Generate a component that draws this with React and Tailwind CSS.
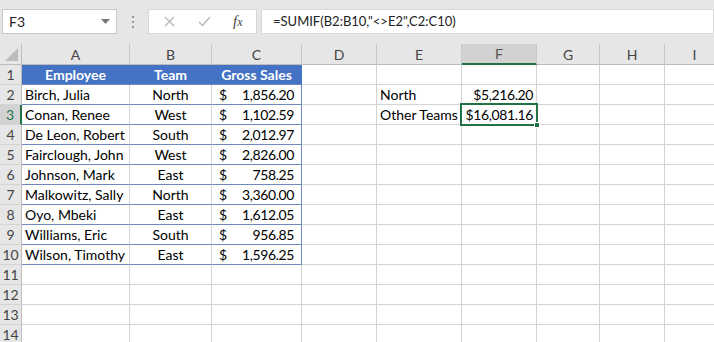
import React from "react";

const cols = ["A", "B", "C", "D", "E", "F", "G", "H", "I"];
const data = [
  ["Birch, Julia", "North", "1,856.20"],
  ["Conan, Renee", "West", "1,102.59"],
  ["De Leon, Robert", "South", "2,012.97"],
  ["Fairclough, John", "West", "2,826.00"],
  ["Johnson, Mark", "East", "758.25"],
  ["Malkowitz, Sally", "North", "3,360.00"],
  ["Oyo, Mbeki", "East", "1,612.05"],
  ["Williams, Eric", "South", "956.85"],
  ["Wilson, Timothy", "East", "1,596.25"],
];

const font = { fontFamily: "Lato, 'Liberation Sans', sans-serif" };

function RowHeader({ n }) {
  const sel = n === 3;
  return (
    <div
      className={
        "h-[20px] flex items-center justify-center border-b border-[#d4d4d4] text-[14px] " +
        (sel
          ? "bg-[#d2d2d2] text-[#217346] border-r-2 border-r-[#217346]"
          : "bg-[#e6e6e6] text-[#444] border-r border-r-[#bdbdbd]")
      }
    >
      {n}
    </div>
  );
}

function Cell({ className = "", children }) {
  return (
    <div className={"h-[20px] border-r border-b border-[#d4d4d4] flex items-center overflow-visible whitespace-nowrap text-[14px] text-black " + className}>
      {children}
    </div>
  );
}

export default function App() {
  const rows = [];
  for (let r = 1; r <= 14; r++) {
    const cells = [];
    cells.push(<RowHeader key="h" n={r} />);
    if (r === 1) {
      cells.push(<Cell key="a" className="bg-[#4472c4] text-white font-bold justify-center border-r-[#4472c4] border-b-[#6f88bd]">Employee</Cell>);
      cells.push(<Cell key="b" className="bg-[#4472c4] text-white font-bold justify-center border-r-[#4472c4] border-b-[#6f88bd]">Team</Cell>);
      cells.push(<Cell key="c" className="bg-[#4472c4] text-white font-bold justify-center border-r-[#4472c4] border-b-[#6f88bd]">Gross Sales</Cell>);
    } else if (r <= 10) {
      const d = data[r - 2];
      cells.push(<Cell key="a" className="pl-[3px] border-b-[#6f88bd]">{d[0]}</Cell>);
      cells.push(<Cell key="b" className="justify-center border-b-[#6f88bd]">{d[1]}</Cell>);
      cells.push(
        <Cell key="c" className="justify-between pl-[7px] pr-[7px] border-b-[#6f88bd] border-r-[#6f88bd]">
          <span>$</span>
          <span className="tracking-[-0.4px]">{d[2]}</span>
        </Cell>
      );
    } else {
      cells.push(<Cell key="a" />);
      cells.push(<Cell key="b" />);
      cells.push(<Cell key="c" />);
    }
    cells.push(<Cell key="d" />);
    if (r === 2) {
      cells.push(<Cell key="e" className="pl-[3px]">North</Cell>);
      cells.push(<Cell key="f" className="justify-end pr-[3px] tracking-[-0.4px]">$5,216.20</Cell>);
    } else if (r === 3) {
      cells.push(<Cell key="e" className="pl-[3px]">Other Teams</Cell>);
      cells.push(
        <Cell key="f" className="justify-end pr-[3px] relative">
          <span className="tracking-[-0.4px]">$16,081.16</span>
          <div className="absolute left-[-2px] top-[-2px] right-[-2px] bottom-[-2px] border-2 border-[#217346]" />
          <div className="absolute right-[-4px] bottom-[-4px] w-[6px] h-[6px] bg-[#217346] border border-white" />
        </Cell>
      );
    } else {
      cells.push(<Cell key="e" />);
      cells.push(<Cell key="f" />);
    }
    cells.push(<Cell key="g" />);
    cells.push(<Cell key="h2" />);
    cells.push(<Cell key="i" />);
    rows.push(...cells);
  }

  return (
    <div className="w-[714px] h-[342px] overflow-hidden bg-white" style={font}>
      {/* toolbar */}
      <div className="h-[44px] bg-[#e6e6e6] flex items-start pt-[9px] pl-[2px]">
        <div className="w-[115px] h-[25px] bg-white border border-[#c8c8c8] flex items-center justify-between pl-[6px] pr-[6px] text-[14px] text-[#222]">
          <span>F3</span>
          <svg width="9" height="5" viewBox="0 0 9 5"><path d="M0 0 L9 0 L4.5 5 Z" fill="#777" /></svg>
        </div>
        <div className="w-[31px] h-[25px] flex flex-col items-center justify-center gap-[3px]">
          <div className="w-[2px] h-[2px] bg-[#999]" />
          <div className="w-[2px] h-[2px] bg-[#999]" />
          <div className="w-[2px] h-[2px] bg-[#999]" />
        </div>
        <div className="w-[109px] h-[25px] bg-white border border-[#d8d8d8] flex items-center">
          <svg className="ml-[15px]" width="11" height="11" viewBox="0 0 11 11"><path d="M1 1 L10 10 M10 1 L1 10" stroke="#b8b8b8" strokeWidth="1.4" /></svg>
          <svg className="ml-[23px]" width="13" height="11" viewBox="0 0 13 11"><path d="M1 6 L4.5 9.5 L12 1" stroke="#b8b8b8" strokeWidth="1.4" fill="none" /></svg>
          <span className="ml-[22px] text-[15px] italic text-[#444]" style={{ fontFamily: "'Liberation Serif', serif" }}>f<span className="text-[12px]">x</span></span>
        </div>
        <div className="ml-[4px] flex-1 h-[25px] bg-white border border-[#d8d8d8] flex items-center pl-[11px] text-[13px] text-[#222]">
          =SUMIF(B2:B10,"&lt;&gt;E2",C2:C10)
        </div>
      </div>
      {/* sheet */}
      <div className="grid grid-cols-[22px_108px_82px_90px_75px_85px_75px_63px_65px_60px]">
        <div className="h-[21px] bg-[#e6e6e6] border-r border-b border-[#bdbdbd] relative">
          <svg className="absolute right-[3px] bottom-[3px]" width="13" height="13" viewBox="0 0 13 13"><path d="M13 0 L13 13 L0 13 Z" fill="#bcbcbc" /></svg>
        </div>
        {cols.map((c) => (
          <div
            key={c}
            className={
              "h-[21px] flex items-center justify-center text-[14px] border-r border-[#c8c8c8] " +
              (c === "F"
                ? "bg-[#d2d2d2] text-[#555] border-b-2 border-b-[#217346]"
                : "bg-[#e6e6e6] text-[#444] border-b border-b-[#bdbdbd]")
            }
          >
            {c}
          </div>
        ))}
        {rows}
      </div>
    </div>
  );
}
